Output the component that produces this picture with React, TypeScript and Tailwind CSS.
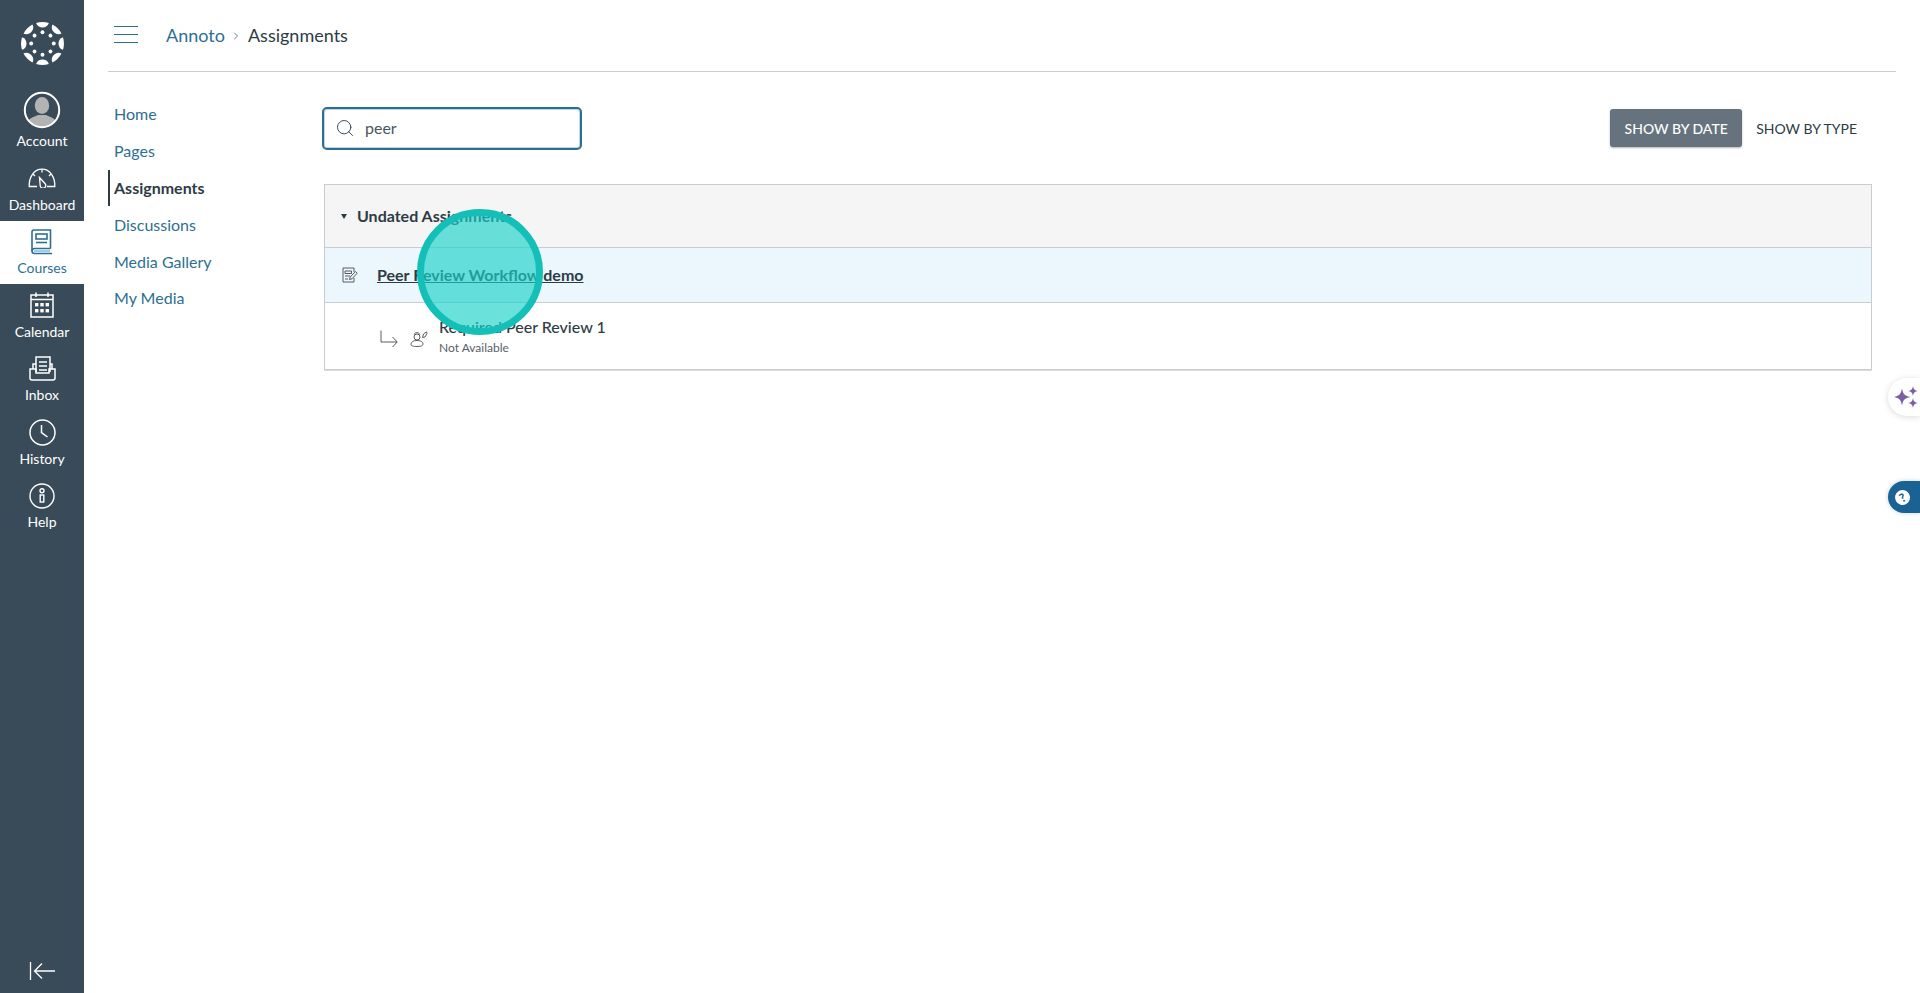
import { ChevronRight, Search } from "lucide-react";
import type { ReactNode } from "react";

const ANGLES = [0, 45, 90, 135, 180, 225, 270, 315];

function CanvasLogo() {
  return (
    <svg width="43" height="43" viewBox="-21 -21 42 42" fill="white">
      {ANGLES.map((a) => (
        <g key={a} transform={`rotate(${a})`}>
          <path d="M-6.2 -20 A21 21 0 0 1 6.2 -20 C4.6 -14.2 -4.6 -14.2 -6.2 -20 Z" />
          <circle cx="0" cy="-11" r="1.9" />
        </g>
      ))}
    </svg>
  );
}

function AccountIcon() {
  return (
    <svg width="38" height="38" viewBox="0 0 38 38">
      <defs>
        <clipPath id="avatar">
          <circle cx="19" cy="19" r="17" />
        </clipPath>
      </defs>
      <g clipPath="url(#avatar)" fill="#b3b3b3">
        <ellipse cx="19" cy="14.5" rx="7.2" ry="8.5" />
        <path d="M2 38 C3 27 11 26 15 24 L23 24 C27 26 35 27 36 38 Z" />
      </g>
      <circle cx="19" cy="19" r="17.2" fill="none" stroke="white" strokeWidth="2" />
    </svg>
  );
}

function DashboardIcon() {
  return (
    <svg width="28" height="20" viewBox="0 0 28 20" fill="none" stroke="white" strokeWidth="1.3">
      <path d="M9 18.5 H1.2 C0.8 9 6 1.2 14 1.2 C22 1.2 27.2 9 26.8 18.5 H19" />
      <path d="M11.5 9.5 L17 15.5 A2.8 2.8 0 1 1 12.2 17.6 Z" />
      <path d="M14 1.5 V4.5 M5 6 L7 8 M23 6 L21 8" />
    </svg>
  );
}

function CoursesIcon({ color }: { color: string }) {
  return (
    <svg width="22" height="26" viewBox="0 0 22 26" fill="none" stroke={color} strokeWidth="1.6">
      <path d="M19.5 19.5 H3.5 C2 19.5 1 20.5 1 22 C1 23.5 2 24.5 3.5 24.5 H21" />
      <path d="M1 22 V3 C1 1.8 1.8 1 3 1 H19.5 V19.5" />
      <rect x="5" y="5" width="11" height="5" />
      <path d="M5 13.5 H16" />
      <path d="M3 22 H19" stroke="#7cc4ea" />
    </svg>
  );
}

function CalendarIcon() {
  return (
    <svg width="24" height="26" viewBox="0 0 24 26" fill="none" stroke="white" strokeWidth="1.5">
      <rect x="1" y="3" width="22" height="22" />
      <path d="M6 0.5 V5 M18 0.5 V5 M1 7.5 H23" />
      <g fill="white" stroke="none">
        <rect x="5" y="11" width="3.4" height="3.4" />
        <rect x="10.3" y="11" width="3.4" height="3.4" />
        <rect x="15.6" y="11" width="3.4" height="3.4" />
        <rect x="5" y="17" width="3.4" height="3.4" />
        <rect x="10.3" y="17" width="3.4" height="3.4" />
        <rect x="15.6" y="17" width="3.4" height="3.4" />
      </g>
    </svg>
  );
}

function InboxIcon() {
  return (
    <svg width="27" height="25" viewBox="0 0 27 25" fill="none" stroke="white" strokeWidth="1.5">
      <path d="M7 16 V1 H21 V16" />
      <path d="M10 6 H18 M10 10 H18 M10 14 H18" />
      <path d="M7 8 H4 V13 M21 8 H23 V13" />
      <path d="M1 13 H7 V17 H20 V13 H26 V22 C26 23 25 24 24 24 H3 C2 24 1 23 1 22 Z" />
    </svg>
  );
}

function HistoryIcon() {
  return (
    <svg width="27" height="27" viewBox="0 0 27 27" fill="none" stroke="white" strokeWidth="1.5">
      <circle cx="13.5" cy="13.5" r="12.5" />
      <path d="M12.5 6 V13.5 L18.5 18" />
    </svg>
  );
}

function HelpIcon() {
  return (
    <svg width="26" height="26" viewBox="0 0 26 26" fill="none" stroke="white" strokeWidth="1.4">
      <circle cx="13" cy="13" r="12" />
      <circle cx="13" cy="7.8" r="2" />
      <rect x="11.2" y="12" width="3.6" height="7" />
    </svg>
  );
}

function CollapseIcon() {
  return (
    <svg width="26" height="20" viewBox="0 0 26 20" fill="none" stroke="white" strokeWidth="1.3">
      <path d="M1.5 1 V19" />
      <path d="M13 2.5 L5.5 10 L13 17.5 M5.5 10 H26" />
    </svg>
  );
}

function AssignmentIcon() {
  return (
    <svg width="16" height="16" viewBox="0 0 16 16" fill="none" stroke="#4a4a4a" strokeWidth="0.9">
      <path d="M12 5 V1 H1 V15 H12 V11" />
      <path d="M3 4 H9.5 V6.5 H3 Z" />
      <path d="M3 9 H8 M3 12 H6" />
      <path d="M7.5 12.5 L8.2 10 L13.5 4.5 L15.2 6.2 L10 11.8 Z" />
    </svg>
  );
}

function ReplyArrowIcon() {
  return (
    <svg width="18" height="18" viewBox="0 0 18 18" fill="none" stroke="#4a4a4a" strokeWidth="0.9">
      <path d="M1 0.5 V12 H17 M12.5 7 L17.2 12 L12.5 17" />
    </svg>
  );
}

function PeerReviewIcon() {
  return (
    <svg width="18" height="16" viewBox="0 0 18 16" fill="none" stroke="#4a4a4a" strokeWidth="0.9">
      <circle cx="7" cy="6" r="3" />
      <path d="M1 13.5 C1 10.5 4 9.5 7 9.5 C10 9.5 13 10.5 13 13 C13 15 10 15.5 7 15.5 C3.5 15.5 1 15 1 13.5 Z" />
      <path d="M4.2 3.5 C5 1 9 1 9.8 3.5" />
      <path d="M12.5 6.5 L13.5 3 L16.5 0.8 L17 2.5 L15 6 Z" />
    </svg>
  );
}

function SparkleIcon() {
  const star = "M0 -10 C1.5 -3 3 -1.5 10 0 C3 1.5 1.5 3 0 10 C-1.5 3 -3 1.5 -10 0 C-3 -1.5 -1.5 -3 0 -10 Z";
  return (
    <svg width="24" height="22" viewBox="0 0 24 22" fill="#7b5ea7">
      <path d={star} transform="translate(8 11) scale(0.85)" />
      <path d={star} transform="translate(19 5) scale(0.5)" />
      <path d={star} transform="translate(19 17) scale(0.5)" />
    </svg>
  );
}

function SideItem({ icon, label, active }: { icon: ReactNode; label: string; active?: boolean }) {
  return (
    <div
      className={
        "flex h-[63.6px] flex-col items-center justify-start pt-[3.5px] text-[14px] leading-[18px] " +
        (active ? "bg-white text-[#2d6f94]" : "text-white")
      }
    >
      <div className="flex h-[35px] items-center justify-center">{icon}</div>
      <span>{label}</span>
    </div>
  );
}

const courseNav = ["Home", "Pages", "Assignments", "Discussions", "Media Gallery", "My Media"];

export default function App() {
  return (
    <div className="relative flex h-[993px] overflow-hidden bg-white font-['Lato','Open_Sans',sans-serif] text-[#2d3b45]">
      <aside className="flex w-[84px] shrink-0 flex-col bg-[#394b58]">
        <div className="flex h-[91px] items-center justify-center pb-[5px]">
          <CanvasLogo />
        </div>
        <div className="flex h-[66px] flex-col items-center justify-start text-[14px] leading-[18px] text-white">
          <AccountIcon />
          <span className="mt-[3px]">Account</span>
        </div>
        <SideItem icon={<DashboardIcon />} label="Dashboard" />
        <SideItem icon={<CoursesIcon color="#2d6f94" />} label="Courses" active />
        <SideItem icon={<CalendarIcon />} label="Calendar" />
        <SideItem icon={<InboxIcon />} label="Inbox" />
        <SideItem icon={<HistoryIcon />} label="History" />
        <SideItem icon={<HelpIcon />} label="Help" />
        <div className="mt-auto flex h-[40px] items-center justify-center pb-[4px]">
          <CollapseIcon />
        </div>
      </aside>

      <div className="flex min-w-0 flex-1 flex-col pl-[24px] pr-[24px]">
        <header className="flex h-[72px] shrink-0 items-center border-b border-[#c7cdd1] pb-[2px] pl-[6px]">
          <div className="flex w-[24px] flex-col gap-[6.5px]">
            <span className="h-[1.5px] bg-[#2d6f94]" />
            <span className="h-[1.5px] bg-[#2d6f94]" />
            <span className="h-[1.5px] bg-[#2d6f94]" />
          </div>
          <div className="ml-[28px] flex items-center text-[18px] leading-[24px]">
            <span className="text-[#2d6f94]">Annoto</span>
            <ChevronRight size={12} strokeWidth={1.5} className="mx-[5.5px] mt-[2px] text-[#4a555e]" />
            <span>Assignments</span>
          </div>
        </header>

        <div className="flex min-h-0 flex-1">
          <nav className="flex w-[216px] shrink-0 flex-col pt-[24px] text-[16px]">
            {courseNav.map((item) => (
              <div
                key={item}
                className={
                  "flex h-[36.8px] items-center pl-[6px] " +
                  (item === "Assignments"
                    ? "relative font-bold text-[#2d3b45]"
                    : "text-[#2d6f94]")
                }
              >
                {item === "Assignments" && (
                  <span className="absolute left-0 top-0 h-[36px] w-[2px] bg-[#2d3b45]" />
                )}
                {item}
              </div>
            ))}
          </nav>

          <main className="min-w-0 flex-1 pt-[34px]">
            <div className="flex h-[44px] items-center justify-between pr-[15px]">
              <div className="ml-[-2px] flex h-[43px] w-[260px] items-center gap-[10px] rounded-[5px] border-2 border-[#2d6f94] pl-[11px] shadow-[inset_0_0_0_1px_#b9d5e6]">
                <Search size={20} strokeWidth={1.1} className="text-[#2d3b45]" />
                <span className="text-[16px] text-[#4a555e]">peer</span>
              </div>
              <div className="mr-[24px] flex items-center gap-[14px] text-[14px]">
                <span className="flex h-[38px] w-[132px] items-center justify-center rounded-[3px] bg-[#66727d] font-medium text-white shadow-[0_1px_2px_rgba(0,0,0,0.3)]">
                  SHOW BY DATE
                </span>
                <span>SHOW BY TYPE</span>
              </div>
            </div>

            <div className="mt-[34px] w-[1548px] border border-[#c7cdd1] shadow-[0_1px_0_#d8dcdf]">
              <div className="flex h-[63px] items-center gap-[10px] border-b border-[#c7cdd1] bg-[#f5f5f5] pl-[16px] text-[16px] font-bold">
                <span className="h-0 w-0 border-x-[3.5px] border-t-[5px] border-x-transparent border-t-[#2d3b45]" />
                <span>Undated Assignments</span>
              </div>
              <div className="flex h-[55px] items-center border-b border-[#c7cdd1] bg-[#ebf6fd] pl-[17px]">
                <AssignmentIcon />
                <span className="ml-[19px] text-[16px] font-bold underline">Peer Review Workflow demo</span>
              </div>
              <div className="flex h-[66px] items-center pl-[55px]">
                <div className="mt-[5px] flex items-center gap-[12px]">
                  <ReplyArrowIcon />
                  <PeerReviewIcon />
                </div>
                <div className="ml-[11px] flex flex-col">
                  <span className="text-[16px] font-medium leading-[20px]">Required Peer Review 1</span>
                  <span className="mt-[3px] text-[12px] leading-[16px] text-[#556069]">Not Available</span>
                </div>
              </div>
            </div>
          </main>
        </div>
      </div>

      {/* click marker over the row */}
      <div className="absolute left-[417px] top-[209px] h-[126px] w-[126px] rounded-full border-[7px] border-[#14bfb8] bg-[#1ad1c8]/65" />

      {/* floating tabs on the right edge */}
      <div className="absolute right-0 top-[378px] flex h-[38px] w-[32px] items-center rounded-l-[19px] bg-white pl-[6px] shadow-[0_1px_6px_rgba(0,0,0,0.15)]">
        <SparkleIcon />
      </div>
      <div className="absolute right-0 top-[481px] flex h-[32px] w-[32px] items-center rounded-l-[16px] bg-[#1b6294] pl-[7px] shadow-[0_0_4px_rgba(27,98,148,0.3)]">
        <span className="flex h-[15px] w-[15px] rotate-[-30deg] items-center justify-center rounded-full bg-white text-[12px] font-black leading-none text-[#1b6294]">
          ?
        </span>
      </div>
    </div>
  );
}
